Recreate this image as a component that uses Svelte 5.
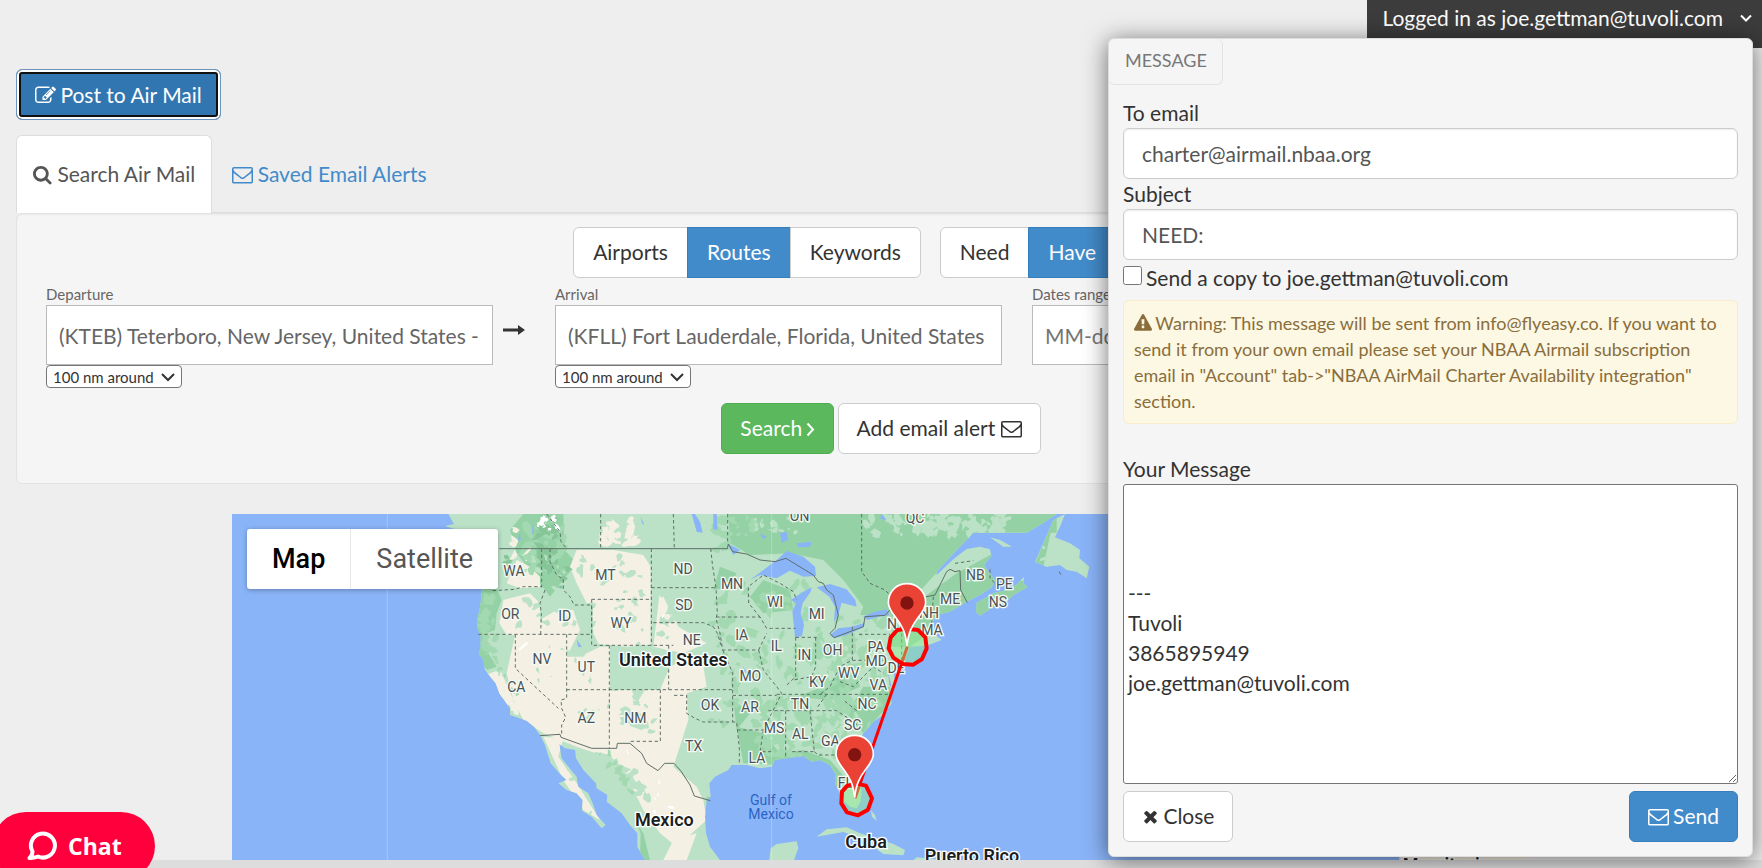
<script>
  const icons = {
    search: 'M1152 832q0-185-131.500-316.500t-316.500-131.500-316.500 131.500-131.500 316.500 131.500 316.500 316.500 131.500 316.500-131.500 131.500-316.500zM1664 1664q0 52-38 90t-90 38q-54 0-90-38l-343-342q-179 124-399 124-143 0-273.500-55.500t-225-150-150-225-55.500-273.500 55.500-273.500 150-225 225-150 273.500-55.500 273.500 55.500 225 150 150 225 55.500 273.500q0 220-124 399l343 343q37 37 37 90z',
    envelope: 'M1664 1504v-768q-32 36-69 66-268 206-426 338-51 43-83 67t-86.500 48.500-102.500 24.500h-2q-48 0-102.500-24.500t-86.500-48.500-83-67q-158-132-426-338-37-30-69-66v768q0 13 9.500 22.500t22.500 9.500h1472q13 0 22.500-9.500t9.500-22.500zm0-1051v-24.500l-.5-13-3-12.500-5.500-9-9-7.500-14-2.500h-1472q-13 0-22.500 9.500t-9.500 22.500q0 168 147 284 193 152 401 317 6 5 35 29.500t46 37.500 44.500 31.500 50.500 27.500 43 9h2q20 0 43-9t50.500-27.500 44.500-31.500 46-37.500 35-29.500q208-165 401-317 54-43 100.500-115.500t46.500-131.500zm128-37v1088q0 66-47 113t-113 47h-1472q-66 0-113-47t-47-113v-1088q0-66 47-113t113-47h1472q66 0 113 47t47 113z',
    edit: 'M888 1184l116-116-152-152-116 116v56h96v96h56zm440-720q-16-16-33 1l-350 350q-17 17-1 33t33-1l350-350q17-17 1-33zm80 594v190q0 119-84.500 203.500t-203.500 84.500h-832q-119 0-203.500-84.500t-84.500-203.500v-832q0-119 84.500-203.500t203.500-84.500h832q63 0 117 25 15 7 18 23 3 17-9 29l-49 49q-14 14-32 8-23-6-45-6h-832q-66 0-113 47t-47 113v832q0 66 47 113t113 47h832q66 0 113-47t47-113v-126q0-13 9-22l64-64q15-15 35-7t20 29zm-96-738l288 288-672 672h-288v-288zm444 132l-92 92-288-288 92-92q28-28 68-28t68 28l152 152q28 28 28 68t-28 68z',
    warning: 'M1024 1375v-190q0-14-9.500-23.500t-22.500-9.500h-192q-13 0-22.500 9.500t-9.500 23.500v190q0 14 9.500 23.500t22.500 9.500h192q13 0 22.500-9.500t9.500-23.500zm-2-374l18-459q0-12-10-19-13-11-24-11h-220q-11 0-24 11-10 7-10 21l17 457q0 10 10 16.500t24 6.500h185q14 0 23.500-6.500t10.500-16.500zm-14-934l768 1408q35 63-2 126-17 29-46.500 46t-63.500 17h-1536q-34 0-63.500-17t-46.500-46q-37-63-2-126l768-1408q17-31 47-49t65-18 65 18 47 49z',
    times: 'M1490 1322q0 40-28 68l-136 136q-28 28-68 28t-68-28l-294-294-294 294q-28 28-68 28t-68-28l-136-136q-28-28-28-68t28-68l294-294-294-294q-28-28-28-68t28-68l136-136q28-28 68-28t68 28l294 294 294-294q28-28 68-28t68 28l136 136q28 28 28 68t-28 68l-294 294 294 294q28 28 28 68z'
  };

  let mode = $state('Routes');
  let kind = $state('Have');
  let departure = $state('(KTEB) Teterboro, New Jersey, United States - ');
  let arrival = $state('(KFLL) Fort Lauderdale, Florida, United States');
  let email = $state('charter@airmail.nbaa.org');
  let subject = $state('NEED:');
  let message = $state('\n\n\n---\nTuvoli\n3865895949\njoe.gettman@tuvoli.com');

  // Map labels: text, centre x, baseline y, in map units.
  const states = [
    ['WA', 852, 228], ['MT', 1126, 241], ['OR', 841, 356], ['ID', 1004, 364], ['WY', 1173, 383],
    ['NV', 936, 493], ['UT', 1069, 515], ['CA', 859, 577], ['AZ', 1069, 669], ['NM', 1216, 669],
    ['ND', 1359, 223], ['MN', 1506, 268], ['SD', 1362, 329], ['WI', 1635, 321], ['MI', 1760, 356],
    ['NE', 1385, 434], ['IA', 1535, 419], ['IL', 1639, 453], ['IN', 1723, 480], ['OH', 1808, 466],
    ['PA', 1938, 457], ['MD', 1939, 498], ['DE', 1998, 518], ['MO', 1561, 542], ['KY', 1763, 561],
    ['WV', 1856, 535], ['VA', 1945, 571], ['OK', 1440, 630], ['AR', 1560, 636], ['TN', 1710, 626],
    ['NC', 1911, 627], ['SC', 1868, 691], ['MS', 1632, 700], ['AL', 1711, 716], ['GA', 1801, 738],
    ['TX', 1391, 754], ['LA', 1581, 788], ['FL', 1846, 865], ['NY', 1998, 386], ['NH', 2097, 355],
    ['MA', 2106, 406], ['ME', 2160, 311], ['NB', 2236, 241], ['PE', 2323, 268], ['NS', 2304, 322],
    ['ON', 1709, 64], ['QC', 2055, 70]
  ];
  const countries = [['United States', 1330, 498], ['Mexico', 1303, 978], ['Cuba', 1908, 1043], ['Puerto Rico', 2226, 1085], ['Mauritania', 3648, 1112]];

  let seed = 7;
  const rnd = () => ((seed = (seed * 16807) % 2147483647) / 2147483647);

  // Irregular patches of vegetation or bare ground scattered over a region.
  function patches(x, y, w, h, n, size, slant = 0) {
    let d = '';
    for (let i = 0; i < n; i++) {
      const t = rnd();
      const cx = x + rnd() * w + slant * t;
      const cy = y + t * h;
      const r = size * (0.4 + rnd());
      const k = 7 + Math.floor(rnd() * 5);
      const turn = rnd() * 3;
      for (let j = 0; j < k; j++) {
        const a = (j / k) * Math.PI * 2;
        const q = r * (0.4 + rnd() * 0.8);
        const px = Math.cos(a) * q * 1.4;
        const py = Math.sin(a) * q * 0.8;
        const ux = cx + px * Math.cos(turn) - py * Math.sin(turn);
        const uy = cy + px * Math.sin(turn) + py * Math.cos(turn);
        d += (j ? 'L' : 'M') + ux.toFixed(0) + ' ' + uy.toFixed(0);
      }
      d += 'Z';
    }
    return d;
  }

  const sand = patches(1110, 60, 100, 70, 14, 15) + patches(1300, 380, 60, 200, 14, 14) + patches(780, 520, 90, 120, 12, 12)
    + patches(850, 90, 60, 100, 10, 10) + patches(1170, 770, 70, 120, 10, 14) + patches(1060, 105, 160, 30, 8, 13);
  const lightWest = patches(860, 170, 380, 220, 50, 11) + patches(1140, 440, 140, 260, 26, 12) + patches(900, 420, 200, 150, 12, 7)
    + patches(1095, 770, 60, 130, 20, 15, 120) + patches(1290, 170, 60, 250, 16, 12) + patches(1030, 610, 200, 60, 9, 9) + patches(1000, 800, 40, 140, 5, 6, 70);
  const mid = patches(1440, 250, 300, 450, 70, 16) + patches(1740, 350, 240, 330, 80, 16) + patches(1580, 600, 280, 170, 60, 15)
    + patches(755, 280, 40, 200, 18, 14) + patches(880, 60, 130, 150, 24, 18) + patches(1100, 760, 40, 160, 12, 11, 110) + patches(1450, 50, 120, 120, 16, 14) + patches(780, 480, 20, 110, 8, 8, 70);
  const lightNorth = patches(1900, 45, 450, 60, 70, 13) + patches(1560, 50, 140, 50, 14, 10) + patches(1750, 640, 130, 100, 14, 9) + patches(2440, 140, 100, 70, 10, 12);
  const dark = patches(920, 60, 60, 150, 24, 12) + patches(985, 170, 30, 100, 6, 8) + patches(825, 160, 15, 60, 5, 9);
  const snow = patches(925, 50, 60, 40, 12, 8) + patches(1270, 880, 70, 60, 4, 10);
</script>

{#snippet icon(d, cls = '')}
  <svg class="icon {cls}" viewBox="0 0 1792 1792" aria-hidden="true"><path {d} /></svg>
{/snippet}

{#snippet pin(x, y)}
  <g transform="translate({x} {y})">
    <path d="M0 0C-4-40-14-60-34-86C-48-104-56-116-56-130C-56-164-30-187 0-187C30-187 56-164 56-130C56-116 48-104 34-86C14-60 4-40 0 0Z" fill="#ea4335" stroke="#fff" stroke-width="5" />
    <circle cx="0" cy="-129" r="20" fill="#811411" />
  </g>
{/snippet}

<header>
  <button class="user">Logged in as joe.gettman@tuvoli.com
    <svg viewBox="0 0 14 14" width="14" height="14" aria-hidden="true"><path d="M2 4.500l5 5 5-5" fill="none" stroke="currentColor" stroke-width="2" /></svg>
  </button>
</header>

<main>
  <button class="btn post">{@render icon(icons.edit, 'lead')} Post to Air Mail</button>

  <nav>
    <a class="tab active" href="#search">{@render icon(icons.search, 'glass')} Search Air Mail</a>
    <a class="tab" href="#alerts">{@render icon(icons.envelope, 'lead')} Saved Email Alerts</a>
  </nav>

  <section class="well">
    <div class="switches">
      <div class="group">
        {#each ['Airports', 'Routes', 'Keywords'] as name}
          <button class="btn" class:on={mode === name} onclick={() => (mode = name)}>{name}</button>
        {/each}
      </div>
      <div class="group kinds">
        {#each ['Need', 'Have'] as name}
          <button class="btn" class:on={kind === name} onclick={() => (kind = name)}>{name}</button>
        {/each}
      </div>
    </div>

    <div class="fields">
      <div class="field">
        <label for="departure">Departure</label>
        <input id="departure" bind:value={departure} />
        <select aria-label="Departure radius"><option>100 nm around</option></select>
      </div>
      <svg class="arrow" viewBox="0 0 22 12" width="22" height="12" aria-hidden="true"><path d="M0 4.500h15V1l7 5-7 5V7.500H0z" fill="#333" /></svg>
      <div class="field">
        <label for="arrival">Arrival</label>
        <input id="arrival" bind:value={arrival} />
        <select aria-label="Arrival radius"><option>100 nm around</option></select>
      </div>
      <div class="field dates">
        <label for="dates">Dates range</label>
        <input id="dates" placeholder="MM-dd-yyyy" />
      </div>
    </div>

    <div class="actions">
      <button class="btn go">Search <svg viewBox="0 0 9 15" width="9" height="15" aria-hidden="true"><path d="M1.500 1.500l5.500 6-5.500 6" fill="none" stroke="currentColor" stroke-width="2" /></svg></button>
      <button class="btn">Add email alert {@render icon(icons.envelope)}</button>
    </div>
  </section>

  <section class="map">
    <svg class="canvas" viewBox="6 42 3894 1038" preserveAspectRatio="xMidYMid slice" role="img" aria-label="Route map">
      <defs>
        <clipPath id="land">
          <path d="M655 42L672 72L645 78L690 92L720 110L760 150L790 200L800 240L780 262L755 270L752 310L742 360L742 385L752 405L752 440L746 462L760 478L765 510L797 550L808 580L840 625L840 645L890 662L912 680L930 705L945 735L962 790L990 822L1010 840L985 850L1010 870L1040 880L1058 900L1056 932L1085 950L1115 985L1127 975L1100 945L1090 915L1075 880L1045 860L1040 830L1015 800L995 775L988 732L1005 745L1035 750L1038 775L1060 810L1098 850L1100 865L1132 885L1130 905L1175 940L1200 975L1222 1000L1222 1040L1245 1080H1470L1440 1040L1428 1000L1425 950L1430 900L1442 890L1438 850L1455 830L1495 810L1505 795L1550 795L1590 805L1625 800L1635 780L1670 775L1720 768L1745 785L1770 780L1800 795L1815 820L1815 850L1830 880L1838 900L1860 920L1880 925L1892 905L1895 870L1880 810L1865 770L1880 740L1900 700L1930 665L1955 648L1985 610L1980 580L1994 540L1990 510L2020 490L2040 440L2090 437L2135 420L2110 400L2105 370L2120 345L2160 335L2205 308L2250 285L2285 262L2295 240L2275 215L2262 195L2284 168L2280 148L2250 140L2210 147L2170 178L2120 225L2120 215L2175 155L2215 115L2230 98L2390 98L2435 72L2480 42Z" />
          <path d="M2238 335L2250 347L2290 320L2330 302L2355 282L2392 262L2380 250L2382 230L2362 252L2330 270L2290 280L2240 308Z" />
          <path d="M2415 185L2440 130L2470 60L2505 42L2490 80L2475 112L2520 130L2550 150L2548 175L2578 200L2570 235L2540 215L2510 210L2490 195L2450 200Z" />
          <path d="M2280 112L2310 120L2346 140L2320 140ZM1760 1010L1790 988L1850 982L1890 1000L1950 1018L1990 1032L2025 1050L2020 1066L1960 1062L1930 1040L1880 1010L1840 996ZM1618 1080L1622 1045L1640 1032L1700 1024L1705 1045L1692 1080ZM2050 1080L2060 1072L2140 1080ZM3508 1064H3900V1080H3508ZM1922 930L1935 945L1940 962L1926 950Z" />
        </clipPath>
      </defs>
      <rect x="6" y="42" width="3894" height="1038" fill="#8ab4f8" />
      <g clip-path="url(#land)">
        <rect x="600" y="42" width="3300" height="1038" fill="#bbe2c6" />
        <path d="M880 42H1000L1004 150L1040 190L1000 240L960 290L900 210L860 160L840 90ZM752 262L800 265L815 300L800 340L795 390L770 400L775 460L800 500L770 510L740 460V300ZM1495 42H2480V98H2230L2100 240L2000 350L1890 345L1900 320L1870 280L1840 240L1780 180L1680 160L1560 165L1500 130ZM1520 680L1600 700L1650 760L1720 750L1800 780L1860 850L1820 860L1760 800L1540 790ZM1900 560L1980 560L1990 600L1900 700L1850 640ZM2070 300L2180 220L2290 160L2300 250L2400 240L2390 280L2250 350L2100 400L2040 440L1980 440L1990 370ZM1430 890L1425 950L1440 1020L1470 1080H1490V890ZM1232 1000L1215 960L1240 1000L1260 1080H1230ZM2470 60L2440 200L2415 190ZM1560 290L1600 240L1680 270L1690 330L1600 340ZM1500 260L1450 270L1470 200L1520 220ZM1700 590L1780 560L1870 490L1890 560L1800 600ZM1510 600L1560 640L1520 690Z" fill="#94d2a5" />
        <path d="M1040 150L1150 150L1240 165L1262 200V300L1190 330L1130 300L1070 310L1040 250L1020 200ZM1090 300L1262 300V435L1190 440L1085 430ZM860 180L900 200L930 230V262L870 265L830 250ZM820 300L900 280L930 310V405L830 405L808 370ZM980 330L1030 330L1050 390L1010 470L1060 470L1085 440L1140 440V570L1290 570L1320 500L1380 470L1420 500L1430 560L1370 580L1375 660L1330 800L1400 860L1420 900L1430 960L1340 1040L1290 1000L1240 930L1200 850L1130 770L1040 740L940 700L880 660L850 600L830 520L855 405ZM770 520L820 530L850 600L830 620ZM940 710L1000 715L985 770L1040 850L1110 960L1060 930L1000 840ZM1400 1000L1370 1080L1300 1080L1330 1020ZM1290 270L1345 380L1430 430L1360 460L1270 440ZM3508 1064H3900V1080H3508Z" fill="#f5f0e4" />
        <path d={sand} fill="#f5f0e4" />
        <path d={lightWest} fill="#bbe2c6" />
        <path d="M1145 500L1200 500L1240 540L1245 570L1220 610L1205 570L1150 555ZM1095 755L1140 765L1180 820L1185 870L1210 930L1180 930L1150 890L1105 830ZM1050 380L1085 330L1090 400L1110 440L1070 460Z" fill="#bbe2c6" />
        <path d={mid} fill="#a3d9b1" />
        <path d={lightNorth} fill="#bbe2c6" />
        <path d={dark} fill="#86c597" />
        <path d={snow} fill="#fff" />
        <g fill="#8ab4f8">
          <path d="M1560 240L1600 210L1640 180L1670 153L1720 170L1755 200L1758 228L1720 230L1680 212L1640 235L1590 225ZM1682 300L1720 275L1745 262L1742 275L1718 310L1712 340L1722 375L1716 408L1695 412L1692 380L1687 335L1698 308ZM1760 262L1800 252L1850 268L1876 300L1880 320L1835 308L1825 345L1812 365L1815 320L1798 290ZM1800 405L1825 385L1865 380L1905 368L1900 382L1850 405L1812 415ZM1900 350L1930 336L1970 328L1978 345L1940 352L1912 360ZM1385 42L1400 95L1418 98L1410 65L1395 42ZM1450 42H1460L1462 90L1450 88ZM1492 130L1530 150L1510 165ZM1650 100L1670 95L1675 120L1655 128ZM1700 130L1745 125L1740 140L1705 142ZM1040 418L1056 442L1044 440ZM906 70L912 100L907 102ZM1232 50L1243 75L1236 70ZM1540 500L1550 520L1542 516ZM1975 520L1985 560L1978 556Z" />
          <path d="M1590 100L1610 110L1600 118ZM1955 42L1970 60L1950 56ZM870 95L872 120L864 122Z" />
        </g>
        <path d="M890 425L895 430L870 452L865 448ZM1188 745L1198 765L1192 762ZM1285 835L1292 850L1286 852ZM1306 340L1298 355L1294 350Z" fill="#fff" />
      </g>
      <g fill="none" stroke="#5f6f68" stroke-width="3">
        <path d="M808 146H1492L1495 132L1508 155L1550 162L1590 180L1635 185L1668 175L1750 225L1765 245L1780 250L1790 270L1810 285L1825 345L1815 385L1800 400L1812 413L1900 380L1905 350L1965 346L1985 325L2090 290L2115 285L2150 215L2160 208L2175 215L2190 212L2192 270L2212 308" />
        <path d="M930 707L990 703L993 712L1085 745H1160L1162 730H1200L1235 760L1250 790L1284 812L1304 790H1332L1352 812L1380 855L1393 888L1441 902" />
        <path stroke-dasharray="10 8" d="M1112 42V146M950 42L990 95L993 125L1010 146M935 146V262M788 272L855 268L880 260H935M960 146V185L980 225L1000 238V270L1020 290L1032 315H1085V403M945 270L930 310L934 340L932 403M745 403H1085M856 403V505L985 625M1010 403V595L993 600L995 625L1007 652L995 675V703M1085 298H1264M1085 298V436H1330M1264 146V436M1264 263H1455M1138 436V745M1010 569H1510M1291 569V724H1200M1316 436V569M1270 368H1420L1450 380L1462 400L1475 440M1330 42L1333 146M1493 42V132M1442 146L1448 200L1458 263L1462 340L1458 355L1470 400L1478 450H1586M1458 351H1590L1610 385H1697M1555 290V260L1600 225L1650 250L1690 275L1700 300M1590 351L1556 310V285M1478 450L1500 500L1508 520V665M1332 586H1370V640L1395 655L1420 666H1520L1528 745L1528 790M1508 586H1640M1586 450L1610 400M1586 450L1600 510L1640 560L1655 580L1625 640L1600 690H1525M1697 412V530L1665 560M1697 412H1760M1757 412V500L1745 530L1690 540M1640 583H1985M1615 632H1820L1870 665L1900 690M1667 632V775M1740 632L1753 755H1685M1753 755L1765 765H1850M1600 690L1590 755H1625M1867 380V480L1830 500L1800 560L1770 583M1887 403H1980M1867 481H1960M1830 545L1870 560L1930 500L1960 520M1790 583L1760 625M1895 42V215L1920 250L1965 270L1985 290M2175 190L2230 182M2110 290L2105 370M2280 208V235L2300 255M2015 400V480M1880 632L1840 600M2488 215L2495 230" />
      </g>
      <path d="M472 42V1080M1625 42V1080" stroke="#fff" stroke-opacity=".35" stroke-width="2" />
      <g class="states">
        {#each states as [name, x, y]}<text {x} {y}>{name}</text>{/each}
      </g>
      <g class="sea"><text x="1623" y="915">Gulf of</text><text x="1623" y="958">Mexico</text></g>
      <g class="countries">
        {#each countries as [name, x, y]}<text {x} {y}>{name}</text>{/each}
      </g>
      <path d="M2032 440L1875 895" stroke="#f00" stroke-width="9" />
      <g fill="#90ee90" fill-opacity=".45" stroke="#f00" stroke-width="12" stroke-linejoin="round">
        <path d="M2031 386L2064 390L2086 412L2090 445L2076 477L2050 494L2018 492L1990 473L1976 445L1982 412L2002 390Z" />
        <path d="M1880 851L1908 857L1926 895L1914 929L1884 946L1851 937L1834 910L1836 875L1852 857Z" />
      </g>
      {@render pin(2031, 438)}
      {@render pin(1874, 893)}
    </svg>
    <div class="types"><button class="chosen">Map</button><button>Satellite</button></div>
  </section>
</main>
<footer></footer>

<button class="chat">
  <svg viewBox="0 0 30 32" width="30" height="32" aria-hidden="true"><path d="M5.500 21.500A12 12 0 1 1 11 26.500C8.500 27.500 5.500 28.500 2.500 28C4.500 26.500 5.500 24.500 5.500 21.500Z" fill="none" stroke="#fff" stroke-width="4" stroke-linejoin="round" /></svg>
  Chat
</button>

<form class="dialog" onsubmit={(e) => e.preventDefault()}>
  <h2>MESSAGE</h2>
  <div class="body">
    <label for="to">To email</label>
    <input id="to" bind:value={email} />
    <label for="subject">Subject</label>
    <input id="subject" bind:value={subject} />
    <label class="copy"><input type="checkbox" />Send a copy to joe.gettman@tuvoli.com</label>
    <p class="warning">{@render icon(icons.warning)} Warning: This message will be sent from info@flyeasy.co. If you want to send it from your own email please set your NBAA Airmail subscription email in "Account" tab-&gt;"NBAA AirMail Charter Availability integration" section.</p>
    <label for="message">Your Message</label>
    <textarea id="message" bind:value={message}></textarea>
    <div class="buttons">
      <button type="button" class="btn">{@render icon(icons.times, 'cross')} Close</button>
      <button class="btn send">{@render icon(icons.envelope, 'lead')} Send</button>
    </div>
  </div>
</form>

<style>
  :global(body) {
    background: #eee;
    font: 21px/30px Lato, sans-serif;
    color: #333;
    overflow: hidden;
  }
  :global(*) { box-sizing: border-box; }
  button, input, select, textarea { font: inherit; color: inherit; margin: 0; }
  header { display: flex; justify-content: flex-end; height: 48px; }
  .user {
    display: flex;
    gap: 16px;
    align-items: center;
    padding: 0 9px 12px 15px;
    border: 0;
    background: #3c3c3c;
    color: #fff;
  }
  main { padding: 21px 16px 0; }
  .icon { width: 21px; height: 21px; fill: currentColor; vertical-align: -3px; }
  .lead { margin-right: -1px; }
  .glass { width: 20px; margin-right: -1px; }
  .cross { width: 19px; height: 23px; vertical-align: -4px; margin: 0 -2px 0 -1px; }
  .btn {
    padding: 9px 18px 10px;
    border: 1px solid #ccc;
    border-radius: 6px;
    background: #fff;
    white-space: nowrap;
  }
  .post {
    display: block;
    padding: 10px 18px 9px;
    background: #3276b1;
    border-color: #6d94bb;
    color: #fff;
    box-shadow: inset 0 0 0 2px #fff, inset 0 0 0 4px #101010;
  }
  nav { display: flex; margin-top: 15px; border-bottom: 1px solid #ddd; }
  .tab {
    padding: 23px 16px;
    border: 1px solid transparent;
    border-bottom: 0;
    border-radius: 6px 6px 0 0;
    margin-right: 3px;
    color: #428bca;
    text-decoration: none;
  }
  .active { background: #fff; border-color: #ddd; color: #555; margin-bottom: -1px; }
  .well {
    padding: 13px 29px 29px;
    border: 1px solid #e3e3e3;
    border-radius: 6px;
    background: #f5f5f5;
    box-shadow: inset 0 1px 2px #0000000d;
  }
  .switches, .actions { display: flex; justify-content: center; }
  .switches { gap: 19px; }
  .group { display: flex; }
  .group .btn { padding: 9px 19px 10px; }
  .group .btn + .btn { margin-left: -1px; border-radius: 0 6px 6px 0; }
  .group .btn:first-child { border-radius: 6px 0 0 6px; }
  .group .btn:nth-child(2):not(:last-child) { border-radius: 0; }
  .group .on, .on, .send { background: #428bca; border-color: #357ebd; color: #fff; }
  .kinds { width: 249px; }
  .kinds .on { flex: 1; text-align: left; }
  .fields { display: flex; align-items: flex-start; margin-top: 5px; }
  .field { display: grid; flex: 0 0 447px; justify-items: start; }
  .field label { font-size: 15px; line-height: 22px; color: #666; }
  .field input {
    width: 100%;
    height: 60px;
    padding: 0 12px;
    border: 1px solid #bbb;
    background: #fff;
    color: #666;
  }
  .dates { margin-left: 30px; flex: 1; }
  .arrow { margin: 41px 30px 0 10px; }
  select {
    height: 23px;
    padding: 0 27px 0 6px;
    border: 1px solid #767676;
    border-radius: 4px;
    appearance: none;
    background: #fff url("data:image/svg+xml,%3Csvg xmlns='http://www.w3.org/2000/svg' width='14' height='10'%3E%3Cpath d='M1 2l6 6 6-6' fill='none' stroke='%23333' stroke-width='2'/%3E%3C/svg%3E") no-repeat right 6px center;
    font-size: 15px;
    line-height: 20px;
  }
  .actions { gap: 4px; margin-top: 15px; }
  .go { background: #5cb85c; border-color: #4cae4c; color: #fff; }
  .go svg { vertical-align: -1px; margin-left: -2px; }
  .map { position: relative; height: 346px; margin: 30px 216px 0; overflow: hidden; }
  .canvas { display: block; width: 100%; height: 100%; font-family: Roboto, sans-serif; text-anchor: middle; }
  .states { font-size: 42px; fill: #4a5254; stroke: #f4faf4; stroke-width: 8px; paint-order: stroke; }
  .countries { font-size: 54px; font-weight: 600; fill: #1c1f22; stroke: #fff; stroke-width: 8px; paint-order: stroke; }
  .sea { font-size: 42px; fill: #2a64c4; }
  .types {
    position: absolute;
    top: 15px;
    left: 15px;
    display: flex;
    border-radius: 3px;
    background: #fff;
    box-shadow: 0 1px 5px #0000004d;
  }
  .types button {
    height: 60px;
    padding: 0 25px;
    border: 0;
    background: none;
    color: #565656;
    font: 27px Roboto, sans-serif;
  }
  .types .chosen { color: #000; font-weight: 500; border-right: 1px solid #e8e8e8; }
  footer { height: 9px; background: #ddd; }
  .chat {
    position: fixed;
    left: -8px;
    bottom: -12px;
    display: flex;
    align-items: center;
    gap: 11px;
    height: 68px;
    padding: 0 33px 0 35px;
    border: 0;
    border-radius: 34px;
    background: #ff003c;
    color: #fff;
    font: bold 23px "Open Sans", sans-serif;
  }
  .dialog {
    position: absolute;
    top: 38px;
    right: 9px;
    width: 645px;
    border: 1px solid #ddd;
    border-radius: 6px;
    background: #f5f5f5;
    box-shadow: 0 3px 24px #0000008c;
  }
  h2 {
    width: max-content;
    margin: 0;
    padding: 6px 15px 9px 16px;
    border: 1px solid #e3e3e3;
    border-width: 0 1px 1px 0;
    border-radius: 6px;
    color: #777;
    font-size: 18px;
    font-weight: normal;
  }
  .body { display: grid; padding: 13px 14px 14px; }
  .body > input {
    height: 51px;
    padding: 0 18px;
    border: 1px solid #ccc;
    border-radius: 6px;
    box-shadow: inset 0 1px 2px #00000013;
    background: #fff;
    color: #555;
  }
  .copy { display: flex; gap: 4px; margin: 3px 0 7px; }
  .copy input { width: 19px; height: 19px; margin-top: 3px; }
  .warning {
    margin: 0 0 30px;
    padding: 9px 10px;
    border: 1px solid #faebcc;
    border-radius: 6px;
    background: #fcf8e3;
    color: #8a6d3b;
    font-size: 18px;
    line-height: 26px;
  }
  .warning .icon { width: 18px; height: 18px; vertical-align: -2px; margin-right: -1px; }
  textarea {
    height: 300px;
    padding: 3px 4px;
    border: 1px solid #767676;
    border-radius: 3px;
    background: #fff;
    resize: vertical;
  }
  .buttons { display: flex; justify-content: space-between; margin-top: 7px; }
</style>
